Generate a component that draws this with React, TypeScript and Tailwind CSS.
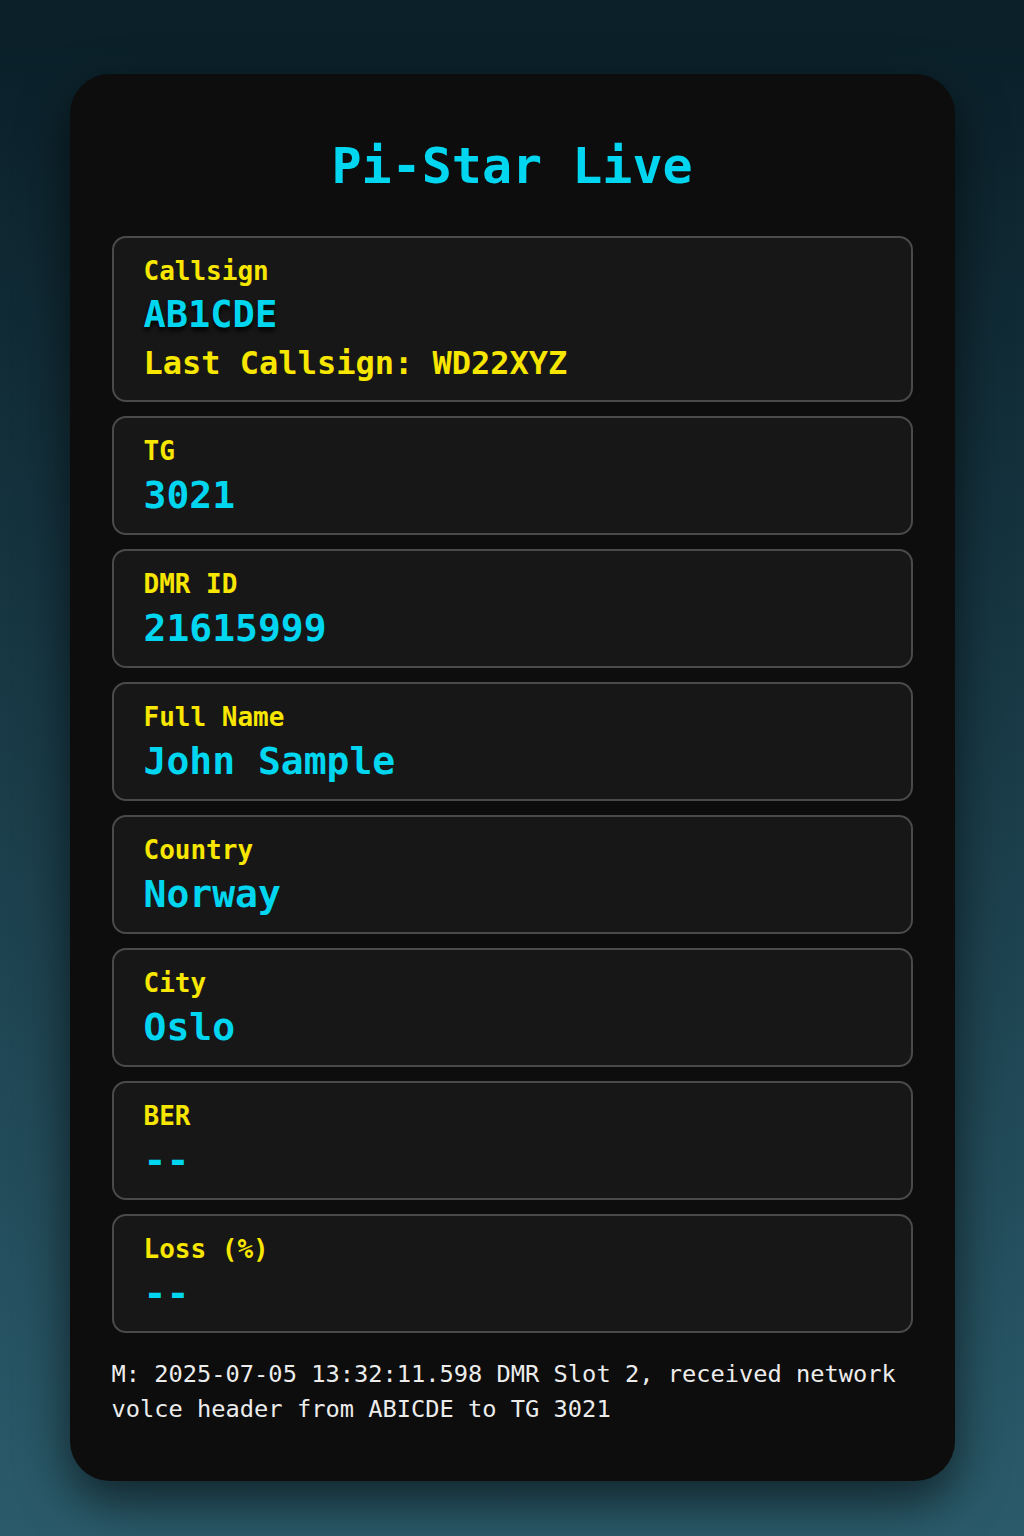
const fields: { label: string; value: string }[] = [
  { label: 'TG', value: '3021' },
  { label: 'DMR ID', value: '21615999' },
  { label: 'Full Name', value: 'John Sample' },
  { label: 'Country', value: 'Norway' },
  { label: 'City', value: 'Oslo' },
  { label: 'BER', value: '--' },
  { label: 'Loss (%)', value: '--' },
]

function Field({ label, value }: { label: string; value: string }) {
  return (
    <div className="rounded-[14px] border-2 border-[#4a4a4a] bg-[#171717] px-[30px] pt-[18px] pb-[15px]">
      <div className="text-[26px] font-bold leading-[30px] text-[#f7e600]">{label}</div>
      <div className="mt-[6px] text-[38px] font-bold leading-[46px] text-[#00d6ef]">{value}</div>
    </div>
  )
}

export default function App() {
  return (
    <div
      className="min-h-[1536px] w-full bg-gradient-to-b from-[#0a1f28] to-[#2b5b6b] pt-[74px] pb-[55px]"
      style={{ fontFamily: '"DejaVu Sans Mono", "Liberation Mono", monospace' }}
    >
      <div className="mx-auto w-[885px] rounded-[40px] bg-[#0d0d0d] px-[42px] pt-[60px] pb-[54px] shadow-[0_20px_50px_rgba(0,0,0,0.6)]">
        <h1 className="text-center text-[50px] font-bold leading-[64px] text-[#00d6ef]">Pi-Star Live</h1>

        <div className="mt-[38px] flex flex-col gap-[14px]">
          <div className="rounded-[14px] border-2 border-[#4a4a4a] bg-[#171717] px-[30px] pt-[18px] pb-[14px]">
            <div className="text-[26px] font-bold leading-[30px] text-[#f7e600]">Callsign</div>
            <div className="mt-[6px] text-[37px] font-bold leading-[46px] text-[#00d6ef] [text-shadow:0_4px_4px_rgba(0,0,0,0.8)]">
              AB1CDE
            </div>
            <div className="mt-[2px] text-[32px] font-bold leading-[46px] text-[#f7e600]">Last Callsign: WD22XYZ</div>
          </div>
          {fields.map((f) => (
            <Field key={f.label} label={f.label} value={f.value} />
          ))}
        </div>

        <p className="mt-[24px] text-[23.7px] leading-[35px] text-[#ececec]">
          M: 2025-07-05 13:32:11.598 DMR Slot 2, received network volce header from ABICDE to TG 3021
        </p>
      </div>
    </div>
  )
}
